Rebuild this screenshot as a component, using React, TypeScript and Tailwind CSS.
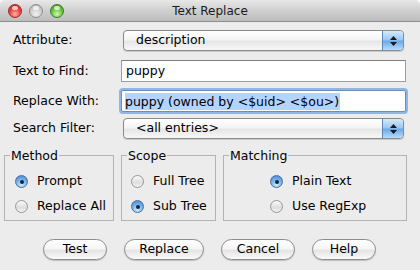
import React from 'react';

const font = { fontFamily: '"DejaVu Sans", "Liberation Sans", sans-serif' };

function Light({ kind }: { kind: 'red' | 'gray' | 'green' }) {
  const cls =
    kind === 'red'
      ? 'border-[#9c2a2a] bg-[radial-gradient(circle_at_50%_75%,#ffb3b0_0%,#f04b45_45%,#b81f1f_100%)]'
      : kind === 'green'
        ? 'border-[#3f7a22] bg-[radial-gradient(circle_at_50%_75%,#d6f7b5_0%,#71c94a_45%,#3c8c1c_100%)]'
        : 'border-[#8f8f8f] bg-[radial-gradient(circle_at_50%_75%,#f2f2f2_0%,#cfcfcf_50%,#a8a8a8_100%)]';
  return (
    <span className={`relative block h-[14px] w-[14px] rounded-full border ${cls}`}>
      <span className="absolute left-[3px] top-[1px] h-[4px] w-[6px] rounded-full bg-white/70" />
    </span>
  );
}

function Stepper() {
  return (
    <span className="flex h-full w-[21px] flex-col items-center justify-center gap-[2px] rounded-r-[4px] border-l border-[#5a86bb] bg-[linear-gradient(#d6e9fb_0%,#9cc8f1_45%,#6eaae6_55%,#b6dcfa_100%)]">
      <svg width="7" height="4" viewBox="0 0 7 4">
        <path d="M3.5 0 L7 4 L0 4 Z" fill="#1b1b1b" />
      </svg>
      <svg width="7" height="4" viewBox="0 0 7 4">
        <path d="M0 0 L7 0 L3.5 4 Z" fill="#1b1b1b" />
      </svg>
    </span>
  );
}

function Popup({ value }: { value: string }) {
  return (
    <div className="ml-[2px] flex h-[21px] w-[281px] items-center overflow-hidden rounded-[4px] border border-[#8a8a8a] bg-[linear-gradient(#ffffff_0%,#f4f4f4_45%,#e6e6e6_55%,#f7f7f7_100%)] shadow-[0_1px_1px_rgba(0,0,0,0.15)]">
      <span className="flex-1 pl-[12px] text-[12.5px] text-black">{value}</span>
      <Stepper />
    </div>
  );
}

function Radio({ on, label }: { on: boolean; label: string }) {
  return (
    <div className="flex h-[25px] items-center gap-[9px]">
      {on ? (
        <span className="flex h-[13px] w-[13px] items-center justify-center rounded-full border border-[#4a6f9e] bg-[radial-gradient(circle_at_50%_80%,#d4ecff_0%,#76b2ec_50%,#3c82d0_100%)]">
          <span className="h-[4px] w-[4px] rounded-full bg-[#16243a]" />
        </span>
      ) : (
        <span className="h-[13px] w-[13px] rounded-full border border-[#969696] bg-[linear-gradient(#fafafa,#dedede_60%,#f4f4f4)]" />
      )}
      <span className="text-[12.5px] text-black">{label}</span>
    </div>
  );
}

function Group({ title, className, children }: { title: string; className: string; children: React.ReactNode }) {
  return (
    <div className={`relative h-[66px] border border-[#b3b3b3] pt-[13px] ${className}`}>
      <span className="absolute left-[5px] top-[-8px] bg-[#ececec] px-[1px] text-[12.5px] leading-[15px] text-black">
        {title}
      </span>
      {children}
    </div>
  );
}

function PillButton({ label, w }: { label: string; w: string }) {
  return (
    <button
      type="button"
      className={`h-[21px] ${w} rounded-full border border-[#8c8c8c] bg-[linear-gradient(#ffffff_0%,#f6f6f6_45%,#e4e4e4_55%,#fafafa_100%)] text-[12.5px] text-black shadow-[0_1px_1px_rgba(0,0,0,0.2)]`}
    >
      {label}
    </button>
  );
}

export default function App() {
  return (
    <div className="h-[270px] w-[420px] bg-white" style={font}>
      <div className="flex h-full flex-col overflow-hidden rounded-t-[5px] bg-[#ececec]">
        <div className="relative flex h-[22px] shrink-0 items-center justify-center border-b border-[#8e8e8e] bg-[linear-gradient(#e8e8e8,#cfcfcf_50%,#bdbdbd)]">
          <div className="absolute left-[8px] top-[4px] flex gap-[7px]">
            <Light kind="red" />
            <Light kind="gray" />
            <Light kind="green" />
          </div>
          <span className="text-[12px] text-[#1a1a1a]">Text Replace</span>
        </div>

        <div className="flex flex-col pl-[13px]">
          <div className="mt-[8px] flex h-[21px] items-center">
            <span className="w-[108px] text-[12.5px] text-black">Attribute:</span>
            <Popup value="description" />
          </div>
          <div className="mt-[9px] flex h-[22px] items-center">
            <span className="w-[108px] text-[12.5px] text-black">Text to Find:</span>
            <div className="flex h-[22px] w-[285px] items-center border border-[#9d9d9d] border-t-[#7d7d7d] bg-white pl-[4px] text-[12.5px] text-black">
              puppy
            </div>
          </div>
          <div className="mt-[8px] flex h-[22px] items-center">
            <span className="w-[108px] text-[12.5px] text-black">Replace With:</span>
            <div className="flex h-[22px] w-[285px] items-center rounded-[2px] border border-[#6a8fbf] bg-white pl-[3px] text-[12.5px] text-black shadow-[0_0_0_2px_#92b6e2]">
              <span className="bg-[#b5d3ff] pr-[1px] leading-[17px]">puppy (owned by &lt;$uid&gt; &lt;$ou&gt;)</span>
            </div>
          </div>
          <div className="mt-[6px] flex h-[21px] items-center">
            <span className="w-[108px] text-[12.5px] text-black">Search Filter:</span>
            <Popup value="<all entries>" />
          </div>
        </div>

        <div className="mt-[16px] flex gap-[7px] pl-[4px]">
          <Group title="Method" className="w-[110px] pl-[10px]">
            <Radio on label="Prompt" />
            <Radio on={false} label="Replace All" />
          </Group>
          <Group title="Scope" className="w-[95px] pl-[9px]">
            <Radio on={false} label="Full Tree" />
            <Radio on label="Sub Tree" />
          </Group>
          <Group title="Matching" className="w-[184px] pl-[46px]">
            <Radio on label="Plain Text" />
            <Radio on={false} label="Use RegExp" />
          </Group>
        </div>

        <div className="mt-[18px] flex justify-center gap-[17px] pr-[1px]">
          <PillButton label="Test" w="w-[64px]" />
          <PillButton label="Replace" w="w-[80px]" />
          <PillButton label="Cancel" w="w-[74px]" />
          <PillButton label="Help" w="w-[64px]" />
        </div>
      </div>
    </div>
  );
}
